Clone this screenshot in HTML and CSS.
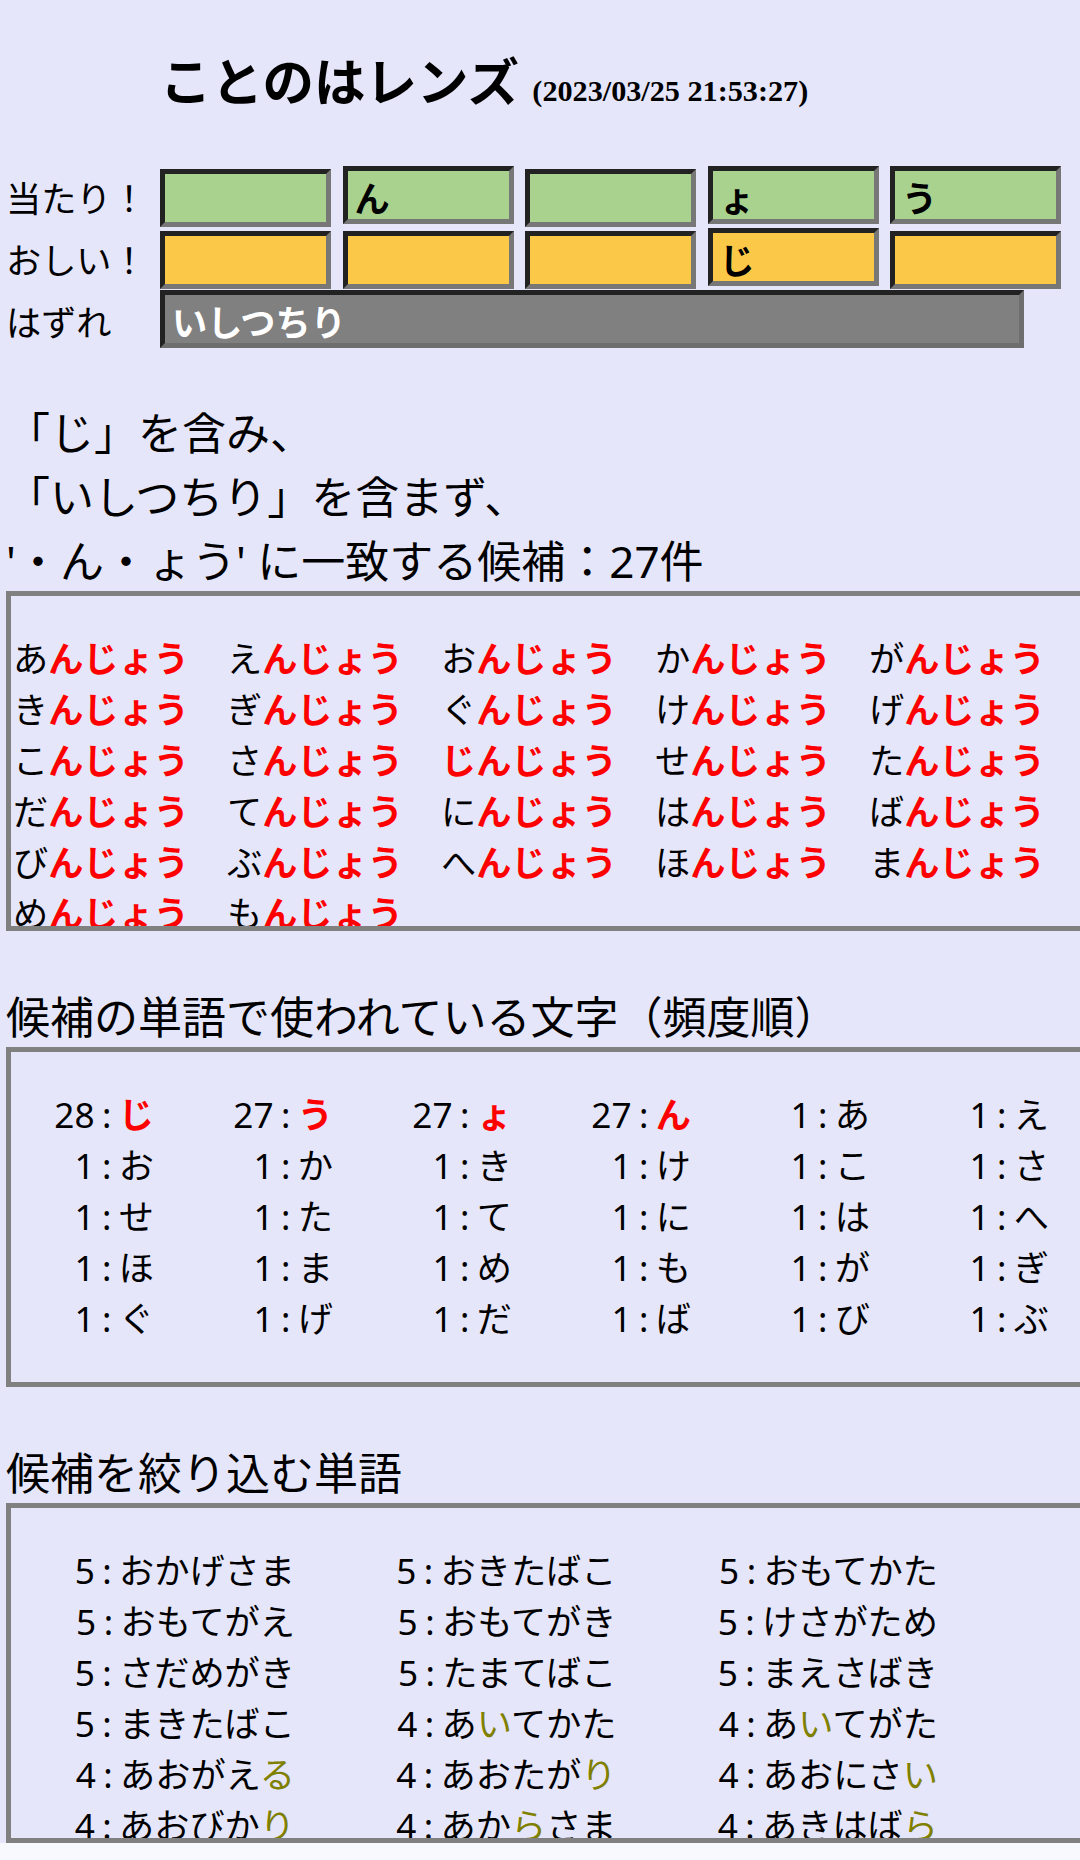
FILE: index.html
```html
<!DOCTYPE html>
<html lang="ja">
<head>
<meta charset="utf-8">
<title>ことのはレンズ</title>
<link rel="stylesheet" href="styles.css">
</head>
<body>
<div class="page">
<h1 class="title">ことのはレンズ <span class="date">(2023/03/25 21:53:27)</span></h1>
<div class="rows">
<div class="row"><span class="label">当たり！</span><span class="tile hit">&nbsp;</span><span class="tile hit">ん</span><span class="tile hit">&nbsp;</span><span class="tile hit">ょ</span><span class="tile hit">う</span></div>
<div class="row"><span class="label">おしい！</span><span class="tile near">&nbsp;</span><span class="tile near">&nbsp;</span><span class="tile near">&nbsp;</span><span class="tile near">じ</span><span class="tile near">&nbsp;</span></div>
<div class="row"><span class="label">はずれ</span><span class="tile miss">いしつちり</span></div>
</div>
<p class="cond">「じ」を含み、<br>「いしつちり」を含まず、<br>'・ん・ょう' に一致する候補：27件</p>
<div class="box cands">
<span>あ<b class="r">んじょう</b></span><span>え<b class="r">んじょう</b></span><span>お<b class="r">んじょう</b></span><span>か<b class="r">んじょう</b></span><span>が<b class="r">んじょう</b></span>
<span>き<b class="r">んじょう</b></span><span>ぎ<b class="r">んじょう</b></span><span>ぐ<b class="r">んじょう</b></span><span>け<b class="r">んじょう</b></span><span>げ<b class="r">んじょう</b></span>
<span>こ<b class="r">んじょう</b></span><span>さ<b class="r">んじょう</b></span><span><b class="r">じんじょう</b></span><span>せ<b class="r">んじょう</b></span><span>た<b class="r">んじょう</b></span>
<span>だ<b class="r">んじょう</b></span><span>て<b class="r">んじょう</b></span><span>に<b class="r">んじょう</b></span><span>は<b class="r">んじょう</b></span><span>ば<b class="r">んじょう</b></span>
<span>び<b class="r">んじょう</b></span><span>ぶ<b class="r">んじょう</b></span><span>へ<b class="r">んじょう</b></span><span>ほ<b class="r">んじょう</b></span><span>ま<b class="r">んじょう</b></span>
<span>め<b class="r">んじょう</b></span><span>も<b class="r">んじょう</b></span>
</div>
<h2 class="sec">候補の単語で使われている文字（頻度順）</h2>
<div class="box freq">
<span>28 : <b class="r">じ</b></span><span>27 : <b class="r">う</b></span><span>27 : <b class="r">ょ</b></span><span>27 : <b class="r">ん</b></span><span>1 : あ</span><span>1 : え</span>
<span>1 : お</span><span>1 : か</span><span>1 : き</span><span>1 : け</span><span>1 : こ</span><span>1 : さ</span>
<span>1 : せ</span><span>1 : た</span><span>1 : て</span><span>1 : に</span><span>1 : は</span><span>1 : へ</span>
<span>1 : ほ</span><span>1 : ま</span><span>1 : め</span><span>1 : も</span><span>1 : が</span><span>1 : ぎ</span>
<span>1 : ぐ</span><span>1 : げ</span><span>1 : だ</span><span>1 : ば</span><span>1 : び</span><span>1 : ぶ</span>
</div>
<h2 class="sec">候補を絞り込む単語</h2>
<div class="box freq words">
<span>5 : おかげさま</span><span>5 : おきたばこ</span><span>5 : おもてかた</span>
<span>5 : おもてがえ</span><span>5 : おもてがき</span><span>5 : けさがため</span>
<span>5 : さだめがき</span><span>5 : たまてばこ</span><span>5 : まえさばき</span>
<span>5 : まきたばこ</span><span>4 : あ<span class="o">い</span>てかた</span><span>4 : あ<span class="o">い</span>てがた</span>
<span>4 : あおがえ<span class="o">る</span></span><span>4 : あおたが<span class="o">り</span></span><span>4 : あおにさ<span class="o">い</span></span>
<span>4 : あおびか<span class="o">り</span></span><span>4 : あか<span class="o">ら</span>さま</span><span>4 : あきはば<span class="o">ら</span></span>
</div>
</div>
</body>
</html>
```

FILE: styles.css
```css
html {
  background: #f8f8ff;
}

body {
  margin: 0;
  font-family: "Noto Sans", "Noto Sans CJK JP", sans-serif;
  color: #000;
}

.page {
  background: #e6e6fa;
  padding: 0 6px;
  overflow: hidden;
  font-size: 35.2px;
}

.title {
  font-size: 51.5px;
  font-weight: bold;
  line-height: normal;
  margin: 41px 0 50px 154px;
}

.date {
  font-family: "Liberation Serif", serif;
  font-size: 30.2px;
  font-weight: bold;
}

.row {
  white-space: nowrap;
  min-height: 62px;
}

.label {
  display: inline-block;
  width: 154px;
}

.tile {
  display: inline-block;
  box-sizing: border-box;
  width: 171px;
  height: 58px;
  margin-right: 11.5px;
  padding-left: 7px;
  border-width: 5px;
  border-style: solid;
  border-color: #222 #777 #777 #222;
  font-weight: bold;
  vertical-align: baseline;
}

.hit {
  background: #a8d28e;
}

.near {
  background: #fcc848;
}

.miss {
  width: 864px;
  background: #808080;
  color: #fff;
  border-color: #222 #6e6e6e #6e6e6e #222;
}

.cond {
  font-size: 44px;
  margin: 47px 0 0;
}

.box {
  box-sizing: border-box;
  width: 1100px;
  height: 340px;
  border: 5px solid #808080;
  padding-top: 35px;
  overflow: hidden;
}

.cands {
  display: grid;
  grid-template-columns: repeat(5, 214px);
  align-content: start;
  padding-left: 2px;
}

.sec {
  font-size: 44px;
  font-weight: normal;
  margin: 52px 0 0;
}

.freq {
  display: grid;
  grid-template-columns: repeat(6, 143px);
  column-gap: 36px;
  align-content: start;
  text-align: right;
  word-spacing: -1.75px;
}

.words {
  grid-template-columns: repeat(3, 284px);
  column-gap: 37.5px;
}

.r {
  color: #f00;
  font-weight: bold;
}

.o {
  color: #808000;
}
```
